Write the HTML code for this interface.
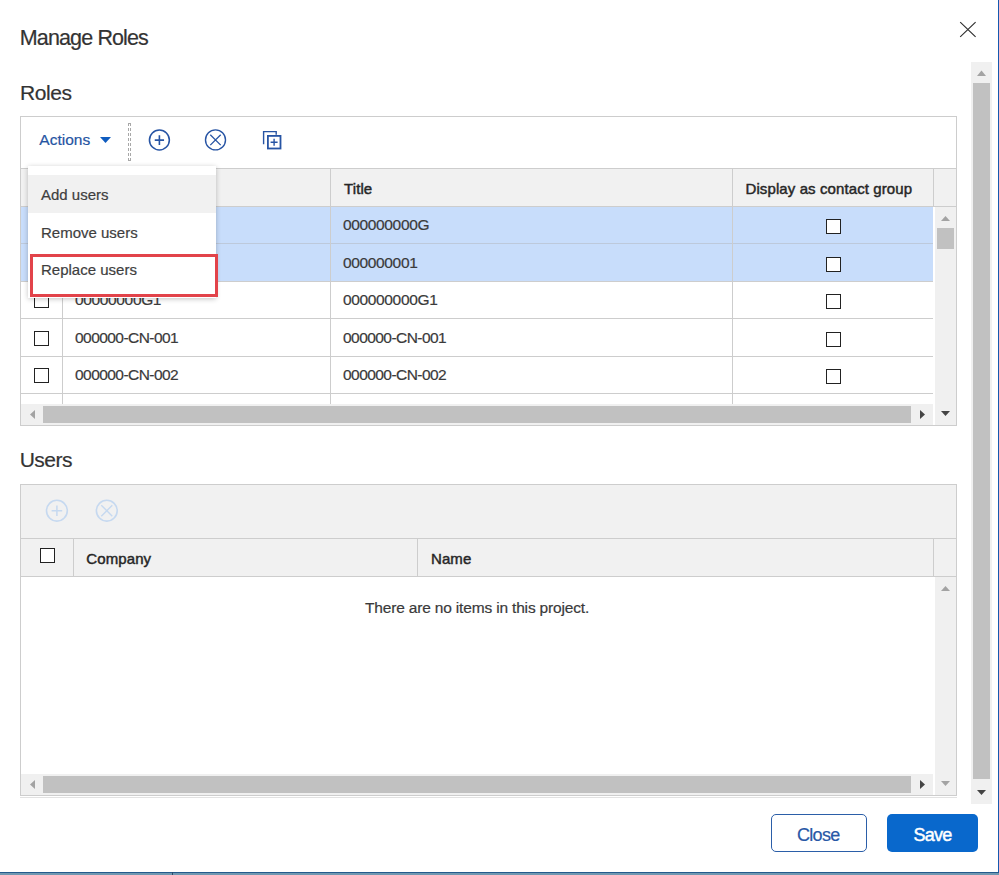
<!DOCTYPE html>
<html><head><meta charset="utf-8">
<style>
*{box-sizing:border-box;margin:0;padding:0}
html,body{width:999px;height:875px;overflow:hidden;background:#fff;font-family:"Liberation Sans",sans-serif;color:#333}
.a{position:absolute}
.t{position:absolute;white-space:nowrap;line-height:1;-webkit-text-stroke:0.2px currentColor}
.hl{position:absolute;height:1px;background:#cdcdcd}
.vl{position:absolute;width:1px;background:#cdcdcd}
.cb{position:absolute;width:15px;height:15px;border:1.5px solid #222;background:#fff}
.hdr{font-weight:normal;font-size:15px;color:#262626;-webkit-text-stroke:0.45px #262626;letter-spacing:0.1px}
.cell{font-size:15.5px;color:#3a3a3a;letter-spacing:-0.35px}
.menu{font-size:15px;color:#3e3e3e;letter-spacing:0}
</style></head><body>

<!-- window borders -->
<div class="a" style="left:998px;top:0;width:1px;height:875px;background:#1559b0"></div>
<div class="a" style="left:0;top:872px;width:999px;height:1px;background:#245a8c"></div>
<div class="a" style="left:0;top:873px;width:999px;height:2px;background:#6f97b0"></div>
<div class="a" style="left:172px;top:872px;width:1px;height:3px;background:#2a4a6a"></div>

<!-- title -->
<div class="t" style="left:19.8px;top:28px;font-size:21.5px;letter-spacing:-0.87px;color:#333">Manage Roles</div>
<!-- close X -->
<svg class="a" style="left:958px;top:20px" width="20" height="20" viewBox="0 0 20 20"><path d="M2.2 2.2L17.6 16.8M17.6 2.2L2.2 16.8" stroke="#2e2e2e" stroke-width="1.15" fill="none"/></svg>

<!-- outer scrollbar -->
<div class="a" style="left:971px;top:62px;width:21px;height:742px;background:#f0f0f0"></div>
<div class="a" style="left:973px;top:83px;width:17px;height:696px;background:#c1c1c1"></div>
<svg class="a" style="left:977px;top:70px" width="9" height="6"><path d="M0 6L4.5 0.5L9 6Z" fill="#a3a3a3"/></svg>
<svg class="a" style="left:977px;top:790px" width="9" height="5"><path d="M0 0L9 0L4.5 5Z" fill="#444"/></svg>

<!-- Roles heading -->
<div class="t" style="left:20px;top:82px;font-size:21px;letter-spacing:-0.4px;color:#333">Roles</div>

<!-- Roles table frame -->
<div class="a" style="left:20px;top:116px;width:937px;height:310px;border:1px solid #cdcdcd;background:#fff"></div>
<!-- toolbar -->
<div class="t" style="left:39.3px;top:132px;font-size:15.5px;color:#2554a2;letter-spacing:0">Actions</div>
<svg class="a" style="left:100px;top:137px" width="12" height="6"><path d="M0 0L11 0L5.5 6Z" fill="#0f5cbf"/></svg>
<svg class="a" style="left:127px;top:122px" width="6" height="40"><path d="M1.5 1V39M3.5 1V39" stroke="#a8a8a8" stroke-width="1" stroke-dasharray="3 2"/><path d="M1 1.5H4M1 38.5H4" stroke="#a8a8a8" stroke-width="1"/></svg>
<svg class="a" style="left:148px;top:129px" width="23" height="23" viewBox="0 0 23 23"><circle cx="11.4" cy="11" r="9.95" stroke="#2754a4" stroke-width="1.55" fill="none"/><path d="M6.75 11.1H16.05M11.4 6.3V15.9" stroke="#2754a4" stroke-width="1.6"/></svg>
<svg class="a" style="left:204px;top:129px" width="23" height="23" viewBox="0 0 23 23"><circle cx="11.5" cy="10.9" r="10" stroke="#2754a4" stroke-width="1.4" fill="none"/><path d="M6.3 5.7L16.7 16.1M16.7 5.7L6.3 16.1" stroke="#2754a4" stroke-width="1.3"/></svg>
<svg class="a" style="left:262px;top:130px" width="20" height="20" viewBox="0 0 20 20"><path d="M1.6 14.2V1.6H14.2V4.8" stroke="#2754a4" stroke-width="1.4" fill="none"/><rect x="5.9" y="5.9" width="12.6" height="12.6" stroke="#2754a4" stroke-width="1.8" fill="none"/><path d="M8.6 12.3H15.6M12.1 8.8V15.8" stroke="#2754a4" stroke-width="1.4"/></svg>

<!-- header -->
<div class="a" style="left:21px;top:168px;width:935px;height:1px;background:#cdcdcd"></div>
<div class="a" style="left:21px;top:169px;width:935px;height:37px;background:#f1f1f1"></div>
<div class="a" style="left:21px;top:206px;width:935px;height:1px;background:#cdcdcd"></div>
<div class="vl" style="left:330px;top:169px;height:37px"></div>
<div class="vl" style="left:732px;top:169px;height:37px"></div>
<div class="vl" style="left:933px;top:169px;height:37px"></div>
<div class="t hdr" style="left:344px;top:181px">Title</div>
<div class="t hdr" style="left:745.5px;top:181px">Display as contact group</div>

<!-- rows -->
<div class="a" style="left:21px;top:207px;width:912px;height:36px;background:#c8ddfb"></div>
<div class="a" style="left:21px;top:244px;width:912px;height:37px;background:#c8ddfb"></div>
<div class="hl" style="left:21px;top:243px;width:912px;background:#bdc9db"></div>
<div class="hl" style="left:21px;top:281px;width:912px"></div>
<div class="hl" style="left:21px;top:318px;width:912px"></div>
<div class="hl" style="left:21px;top:356px;width:912px"></div>
<div class="hl" style="left:21px;top:393px;width:912px"></div>
<div class="vl" style="left:62px;top:207px;height:197px"></div>
<div class="vl" style="left:330px;top:207px;height:197px"></div>
<div class="vl" style="left:732px;top:207px;height:197px"></div>

<div class="cb" style="left:34px;top:293px"></div>
<div class="cb" style="left:34px;top:331px"></div>
<div class="cb" style="left:34px;top:368px"></div>
<div class="cb" style="left:826px;top:219px"></div>
<div class="cb" style="left:826px;top:257px"></div>
<div class="cb" style="left:826px;top:294px"></div>
<div class="cb" style="left:826px;top:332px"></div>
<div class="cb" style="left:826px;top:369px"></div>

<div class="t cell" style="left:75px;top:292px">00000000G1</div>
<div class="t cell" style="left:75px;top:329.5px;letter-spacing:-0.55px">000000-CN-001</div>
<div class="t cell" style="left:75px;top:366.5px;letter-spacing:-0.55px">000000-CN-002</div>
<div class="t cell" style="left:343px;top:216.5px">000000000G</div>
<div class="t cell" style="left:343px;top:254.5px">000000001</div>
<div class="t cell" style="left:343px;top:292px">000000000G1</div>
<div class="t cell" style="left:343px;top:329.5px;letter-spacing:-0.55px">000000-CN-001</div>
<div class="t cell" style="left:343px;top:366.5px;letter-spacing:-0.55px">000000-CN-002</div>

<!-- roles v-scroll -->
<div class="a" style="left:935px;top:207px;width:21px;height:218px;background:#f0f0f0"></div>
<div class="a" style="left:937px;top:228px;width:17px;height:21px;background:#c1c1c1"></div>
<svg class="a" style="left:941px;top:216px" width="9" height="5"><path d="M0 5L4.5 0L9 5Z" fill="#a3a3a3"/></svg>
<svg class="a" style="left:941px;top:411px" width="9" height="5"><path d="M0 0L9 0L4.5 5Z" fill="#444"/></svg>
<!-- roles h-scroll -->
<div class="a" style="left:21px;top:404px;width:912px;height:21px;background:#f0f0f0"></div>
<div class="a" style="left:43px;top:406px;width:868px;height:17px;background:#c1c1c1"></div>
<svg class="a" style="left:30px;top:410px" width="5" height="9"><path d="M5 0L5 9L0 4.5Z" fill="#a3a3a3"/></svg>
<svg class="a" style="left:920px;top:410px" width="5" height="9"><path d="M0 0L5 4.5L0 9Z" fill="#444"/></svg>

<!-- dropdown -->
<div class="a" style="left:28px;top:166px;width:188px;height:132px;background:#fff;box-shadow:0 1px 5px rgba(0,0,0,0.24)"></div>
<div class="a" style="left:28px;top:175px;width:188px;height:38px;background:#f1f1f1"></div>
<div class="t menu" style="left:41px;top:186.5px">Add users</div>
<div class="t menu" style="left:41px;top:224.6px">Remove users</div>
<div class="t menu" style="left:41px;top:261.6px">Replace users</div>
<div class="a" style="left:30px;top:254px;width:188px;height:43px;border:3px solid #e2434a"></div>

<!-- Users heading -->
<div class="t" style="left:19.7px;top:449px;font-size:21px;letter-spacing:-0.5px;color:#333">Users</div>

<!-- Users table -->
<div class="a" style="left:20px;top:484px;width:937px;height:312px;border:1px solid #cdcdcd;background:#fff"></div>
<div class="a" style="left:21px;top:485px;width:935px;height:53px;background:#f1f1f1"></div>
<svg class="a" style="left:45px;top:499px" width="24" height="24" viewBox="0 0 24 24"><circle cx="11.9" cy="11.7" r="10.4" stroke="#c6d9f0" stroke-width="1.6" fill="none"/><path d="M6.6 11.7H17.2M11.9 6.4V17" stroke="#c6d9f0" stroke-width="1.5"/></svg>
<svg class="a" style="left:95px;top:499px" width="24" height="24" viewBox="0 0 24 24"><circle cx="11.8" cy="11.7" r="10.4" stroke="#c6d9f0" stroke-width="1.6" fill="none"/><path d="M6.3 6.2L17.3 17.2M17.3 6.2L6.3 17.2" stroke="#c6d9f0" stroke-width="1.4"/></svg>
<div class="a" style="left:21px;top:538px;width:935px;height:1px;background:#cdcdcd"></div>
<div class="a" style="left:21px;top:539px;width:935px;height:37px;background:#f1f1f1"></div>
<div class="a" style="left:21px;top:576px;width:935px;height:1px;background:#cdcdcd"></div>
<div class="vl" style="left:73px;top:539px;height:37px"></div>
<div class="vl" style="left:417px;top:539px;height:37px"></div>
<div class="vl" style="left:933px;top:539px;height:37px"></div>
<div class="cb" style="left:40px;top:548px"></div>
<div class="t hdr" style="left:86.3px;top:550.5px">Company</div>
<div class="t hdr" style="left:431px;top:550.5px">Name</div>
<div class="t" style="left:365px;top:600px;font-size:15.5px;color:#3a3a3a;letter-spacing:-0.17px">There are no items in this project.</div>

<!-- users v-scroll -->
<div class="a" style="left:935px;top:577px;width:21px;height:218px;background:#f0f0f0"></div>
<svg class="a" style="left:941px;top:586px" width="9" height="5"><path d="M0 5L4.5 0L9 5Z" fill="#a3a3a3"/></svg>
<svg class="a" style="left:941px;top:781px" width="9" height="5"><path d="M0 0L9 0L4.5 5Z" fill="#a3a3a3"/></svg>
<!-- users h-scroll -->
<div class="a" style="left:21px;top:774px;width:912px;height:21px;background:#f0f0f0"></div>
<div class="a" style="left:43px;top:776px;width:868px;height:17px;background:#c1c1c1"></div>
<svg class="a" style="left:30px;top:780px" width="5" height="9"><path d="M5 0L5 9L0 4.5Z" fill="#a3a3a3"/></svg>
<svg class="a" style="left:920px;top:780px" width="5" height="9"><path d="M0 0L5 4.5L0 9Z" fill="#444"/></svg>
<div class="a" style="left:20px;top:797px;width:937px;height:1px;background:#e2e2e2"></div>

<!-- buttons -->
<div class="a" style="left:771px;top:814px;width:96px;height:38px;border:1px solid #2b5ea8;border-radius:5px;background:#fff"></div>
<div class="t" style="left:797px;top:825.5px;font-size:18px;color:#2858a6;letter-spacing:-0.7px">Close</div>
<div class="a" style="left:887px;top:814px;width:91px;height:38px;border-radius:5px;background:#0968cc"></div>
<div class="t" style="left:913.5px;top:825.5px;font-size:18px;font-weight:normal;-webkit-text-stroke:0.45px #fff;color:#fff;letter-spacing:-0.75px">Save</div>

</body></html>
